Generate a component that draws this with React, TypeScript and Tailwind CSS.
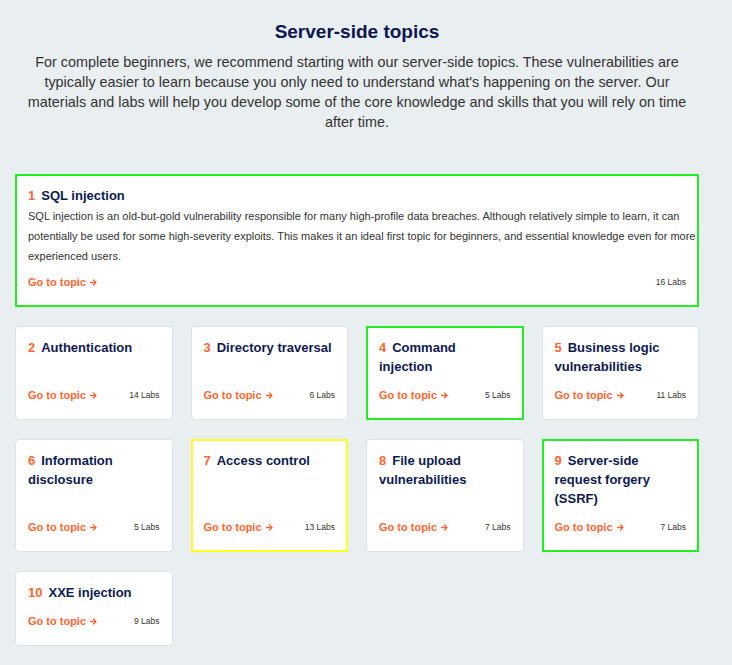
import React from 'react';

type Topic = {
  n: number;
  title: string;
  labs: number;
  mark?: 'green' | 'yellow';
};

const TOPICS: Topic[] = [
  { n: 2, title: 'Authentication', labs: 14 },
  { n: 3, title: 'Directory traversal', labs: 6 },
  { n: 4, title: 'Command injection', labs: 5, mark: 'green' },
  { n: 5, title: 'Business logic vulnerabilities', labs: 11 },
  { n: 6, title: 'Information disclosure', labs: 5 },
  { n: 7, title: 'Access control', labs: 13, mark: 'yellow' },
  { n: 8, title: 'File upload vulnerabilities', labs: 7 },
  { n: 9, title: 'Server-side request forgery (SSRF)', labs: 7, mark: 'green' },
  { n: 10, title: 'XXE injection', labs: 9 },
];

const Arrow = () => (
  <svg width="7" height="7" viewBox="0 0 7 7" className="inline-block ml-[4px] align-[0px]" fill="none">
    <path d="M0.5 3.5H6M3.5 1L6 3.5L3.5 6" stroke="#ff6633" strokeWidth="1.3" strokeLinecap="round" strokeLinejoin="round" />
  </svg>
);

const Footer: React.FC<{ labs: number }> = ({ labs }) => (
  <div className="mt-auto flex items-center justify-between h-[14px]">
    <span className="text-[11px] font-bold text-[#ff6633] leading-[14px] whitespace-nowrap">
      Go to topic
      <Arrow />
    </span>
    <span className="text-[8.5px] text-[#333333] leading-[14px]">{labs} Labs</span>
  </div>
);

const Title: React.FC<{ n: number; title: string }> = ({ n, title }) => (
  <h3 className="text-[13px] font-bold leading-[19px] text-[#0c1a4f]">
    <span className="text-[#ff6633] pr-[6px]">{n}</span>
    <span>{title}</span>
  </h3>
);

const cardClass = (mark?: 'green' | 'yellow') => {
  if (mark === 'green') return 'bg-white border-2 border-[#22ee22] px-[11px] pt-[10px] pb-[16px]';
  if (mark === 'yellow') return 'bg-white border-2 border-[#ffff22] px-[11px] pt-[10px] pb-[16px]';
  return 'bg-white border border-[#dde2e6] rounded-[4px] px-[12px] pt-[11px] pb-[17px]';
};

const App: React.FC = () => {
  return (
    <div className="min-h-[665px] bg-[#e9eef1] font-['Liberation_Sans',Arial,sans-serif]">
      <div className="w-[714px] px-[15px] pt-[21px] pb-[20px]">
        {/* Intro */}
        <div className="text-center">
          <h2 className="text-[19px] font-bold leading-[22px] text-[#0c1651]">Server-side topics</h2>
          <p className="mt-[9px] text-[14.4px] leading-[20px] text-[#333333]">
            For complete beginners, we recommend starting with our server-side topics. These vulnerabilities are
            typically easier to learn because you only need to understand what's happening on the server. Our
            materials and labs will help you develop some of the core knowledge and skills that you will rely on time
            after time.
          </p>
        </div>

        {/* Featured topic */}
        <div className={`mt-[42px] flex flex-col ${cardClass('green')}`}>
          <Title n={1} title="SQL injection" />
          <p className="mt-[1px] mr-[-10px] text-[11px] leading-[20px] text-[#333333]">
            SQL injection is an old-but-gold vulnerability responsible for many high-profile data breaches. Although
            relatively simple to learn, it can potentially be used for some high-severity exploits. This makes it an
            ideal first topic for beginners, and essential knowledge even for more experienced users.
          </p>
          <div className="mt-[9px]">
            <Footer labs={16} />
          </div>
        </div>

        {/* Topic grid */}
        <div className="mt-[19px] grid grid-cols-4 gap-x-[18px] gap-y-[19px]">
          {TOPICS.map((t) => (
            <div key={t.n} className={`flex flex-col ${cardClass(t.mark)}`}>
              <Title n={t.n} title={t.title} />
              <div className="mt-[12px] flex-1 flex flex-col">
                <Footer labs={t.labs} />
              </div>
            </div>
          ))}
        </div>
      </div>
    </div>
  );
};

export default App;
